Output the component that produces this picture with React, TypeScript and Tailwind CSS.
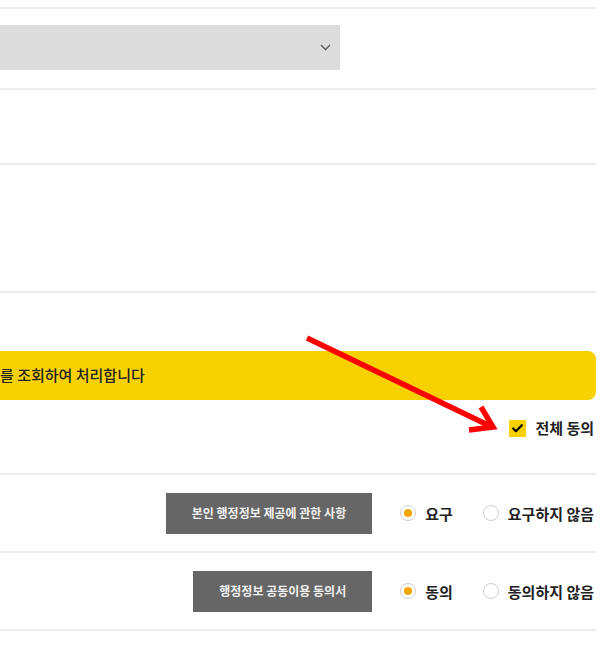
import { Check } from "lucide-react";

const font = {
  fontFamily: '"Noto Sans CJK KR", "Noto Sans", sans-serif',
};

function Radio({ checked, label }: { checked?: boolean; label: string }) {
  return (
    <label className="flex items-center gap-[9px]">
      <span className="flex h-4 w-4 shrink-0 items-center justify-center rounded-full border border-[#cfcfcf] bg-white">
        {checked && <span className="h-2 w-2 rounded-full bg-[#f2a600]" />}
      </span>
      <span className="whitespace-nowrap text-[15px] font-bold leading-none text-[#222]">
        {label}
      </span>
    </label>
  );
}

function ConsentRow({
  title,
  yes,
  no,
}: {
  title: string;
  yes: string;
  no: string;
}) {
  return (
    <div className="flex h-[78px] items-center justify-end border-t-2 border-[#ececec] pr-[2px]">
      <button className="flex h-[41px] items-center bg-[#666666] px-[26px] text-[12px] font-bold text-[#f0f0f0]">
        {title}
      </button>
      <div className="ml-[28px] flex items-center gap-[30px]">
        <Radio checked label={yes} />
        <Radio label={no} />
      </div>
    </div>
  );
}

export default function App() {
  return (
    <div className="relative h-[665px] w-[600px] overflow-hidden bg-white" style={font}>
      <div className="w-[596px] pt-[7px]">
        <div className="h-[81px] border-t-2 border-[#ececec] pt-[16px]">
          <div className="flex h-[45px] w-[340px] items-center justify-end bg-[#dcdcdc] pr-[9px]">
            <svg width="11" height="7" viewBox="0 0 11 7" fill="none">
              <path d="M1 1l4.5 4.5L10 1" stroke="#555" strokeWidth="1.3" />
            </svg>
          </div>
        </div>
        <div className="h-[75px] border-t-2 border-[#ececec]" />
        <div className="h-[128px] border-t-2 border-[#ececec]" />
        <div className="h-[182px] border-t-2 border-[#ececec] pt-[58px]">
          <div className="flex h-[49px] items-center rounded-r-[8px] bg-[#f7d100]">
            <p className="whitespace-nowrap text-[15px] font-medium text-[#222]">
              를 조회하여 처리합니다
            </p>
          </div>
          <div className="mt-[17px] flex items-center justify-end gap-[9px] pr-[2px]">
            <span className="flex h-[17px] w-[17px] items-center justify-center bg-[#f7d100]">
              <Check className="h-[13px] w-[13px] text-black" strokeWidth={4} />
            </span>
            <span className="whitespace-nowrap text-[15px] font-bold text-[#222]">
              전체 동의
            </span>
          </div>
        </div>
        <ConsentRow title="본인 행정정보 제공에 관한 사항" yes="요구" no="요구하지 않음" />
        <div className="border-b-2 border-[#ececec]">
          <ConsentRow title="행정정보 공동이용 동의서" yes="동의" no="동의하지 않음" />
        </div>
      </div>

      <svg
        className="pointer-events-none absolute left-0 top-0"
        width="600"
        height="665"
        viewBox="0 0 600 665"
      >
        <line x1="307" y1="338" x2="490" y2="426" stroke="#ff0000" strokeWidth="5.5" />
        <polyline
          points="481,407 493,427 469,430"
          fill="none"
          stroke="#ff0000"
          strokeWidth="5.5"
          strokeLinejoin="miter"
        />
      </svg>
    </div>
  );
}
